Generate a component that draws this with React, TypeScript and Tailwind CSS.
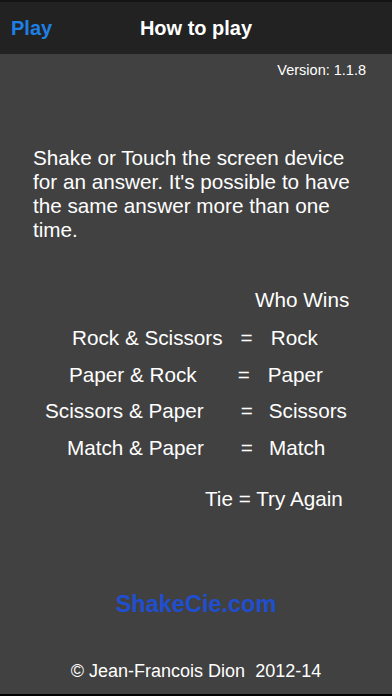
const font = { fontFamily: '"Liberation Sans", Arial, sans-serif' };

const rows = [
  { left: "Rock & Scissors", right: "Rock", pad: "pl-[72px]", gapA: "w-[18px]", gapB: "w-[18px]" },
  { left: "Paper & Rock", right: "Paper", pad: "pl-[69px]", gapA: "w-[41px]", gapB: "w-[18px]" },
  { left: "Scissors & Paper", right: "Scissors", pad: "pl-[45px]", gapA: "w-[37px]", gapB: "w-[16px]" },
  { left: "Match & Paper", right: "Match", pad: "pl-[67px]", gapA: "w-[37px]", gapB: "w-[16px]" },
];

export default function App() {
  return (
    <div className="w-[392px] h-[696px] flex flex-col bg-[#414141] text-white" style={font}>
      <div className="h-[2px] bg-[#141414]" />
      <div className="h-[52px] bg-[#222222] flex items-center relative">
        <span className="ml-[11px] text-[20px] font-bold text-[#1e80e4]">Play</span>
        <span className="absolute left-0 right-0 text-center text-[20px] font-bold pointer-events-none">
          How to play
        </span>
      </div>
      <div className="flex-1 flex flex-col">
        <div className="text-right pr-[26px] pt-[8px] text-[14.5px] leading-[17px]">Version: 1.1.8</div>
        <p className="mt-[67px] px-[33px] text-[20.7px] leading-[24px]">
          Shake or Touch the screen device for an answer. It's possible to have the same answer more than one time.
        </p>
        <div className="mt-[46px] pl-[255px] text-[20.7px] leading-[24px]">Who Wins</div>
        <div className="mt-[14px] flex flex-col gap-[12.5px] text-[20.7px] leading-[24px]">
          {rows.map((r) => (
            <div key={r.left} className={`flex ${r.pad}`}>
              <span>{r.left}</span>
              <span className={r.gapA} />
              <span>=</span>
              <span className={r.gapB} />
              <span>{r.right}</span>
            </div>
          ))}
        </div>
        <div className="mt-[27px] pl-[205px] text-[20.7px] leading-[24px]">Tie = Try Again</div>
        <div className="mt-[80px] text-center text-[23.5px] font-bold text-[#1f4fd0] leading-[26px]">ShakeCie.com</div>
        <div className="mt-[43px] text-center text-[18px] leading-[22px]">© Jean-Francois Dion&nbsp; 2012-14</div>
      </div>
      <div className="h-[2px] bg-black" />
    </div>
  );
}
